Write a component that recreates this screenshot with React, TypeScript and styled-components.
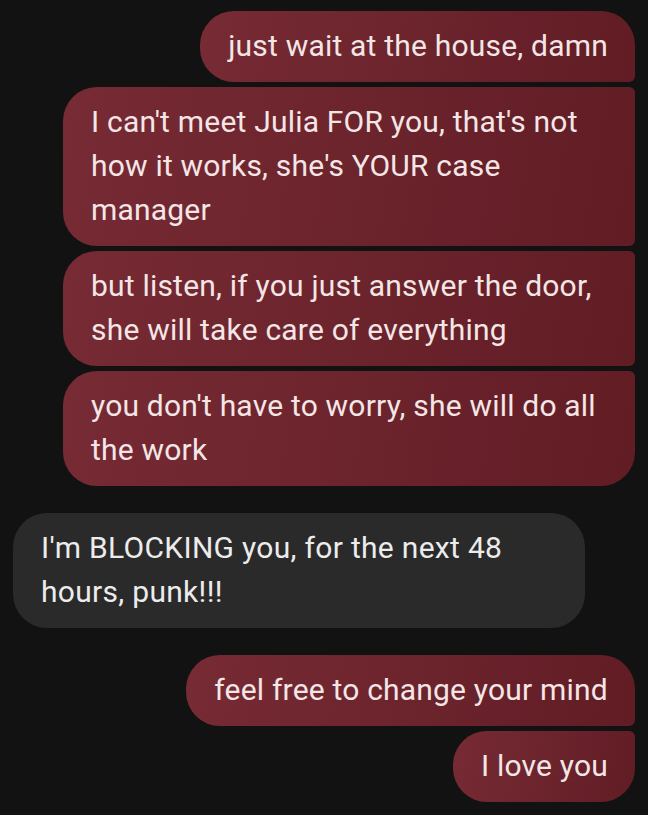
import React from "react";
import styled, { createGlobalStyle, css } from "styled-components";

const GlobalStyle = createGlobalStyle`
  html, body {
    margin: 0;
    padding: 0;
    background: #121212;
  }
  body {
    font-family: Roboto, "Noto Sans", "Liberation Sans", sans-serif;
  }
`;

type Side = "sent" | "received";
type Pos = "single" | "first" | "middle" | "last";

const Thread = styled.div`
  display: flex;
  flex-direction: column;
  gap: 27px;
  padding: 11px 13px;
  width: 648px;
  box-sizing: border-box;
`;

const Group = styled.div<{ $side: Side }>`
  display: flex;
  flex-direction: column;
  gap: 5px;
  align-items: ${(p) => (p.$side === "sent" ? "flex-end" : "flex-start")};
`;

const L = "34px";
const S = "6px";

const radii = (side: Side, pos: Pos) => {
  if (side === "received") return `${L}`;
  const tr = pos === "single" || pos === "first" ? L : S;
  const br = pos === "single" || pos === "last" ? L : S;
  return `${L} ${tr} ${br} ${L}`;
};

const Bubble = styled.div<{ $side: Side; $pos: Pos }>`
  box-sizing: border-box;
  max-width: 572px;
  padding: 13px 27px 14px 28px;
  font-size: 30px;
  line-height: 44px;
  border-radius: ${(p) => radii(p.$side, p.$pos)};
  ${(p) =>
    p.$side === "sent"
      ? css`
          letter-spacing: 0.2px;
          background: linear-gradient(100deg, #772b34 0%, #6b232c 55%, #611c24 100%);
          color: #f4e6e6;
        `
      : css`
          letter-spacing: 0.3px;
          background: #2a2a2a;
          color: #ececec;
        `}
`;

type G = { side: Side; msgs: string[] };

const groups: G[] = [
  {
    side: "sent",
    msgs: [
      "just wait at the house, damn",
      "I can't meet Julia FOR you, that's not how it works, she's YOUR case manager",
      "but listen, if you just answer the door, she will take care of everything",
      "you don't have to worry, she will do all the work",
    ],
  },
  {
    side: "received",
    msgs: ["I'm BLOCKING you, for the next 48 hours, punk!!!"],
  },
  {
    side: "sent",
    msgs: ["feel free to change your mind", "I love you"],
  },
];

const posOf = (i: number, n: number): Pos =>
  n === 1 ? "single" : i === 0 ? "first" : i === n - 1 ? "last" : "middle";

export default function App() {
  return (
    <>
      <GlobalStyle />
      <Thread>
        {groups.map((g, gi) => (
          <Group key={gi} $side={g.side}>
            {g.msgs.map((m, i) => (
              <Bubble key={i} $side={g.side} $pos={posOf(i, g.msgs.length)}>
                {m}
              </Bubble>
            ))}
          </Group>
        ))}
      </Thread>
    </>
  );
}
